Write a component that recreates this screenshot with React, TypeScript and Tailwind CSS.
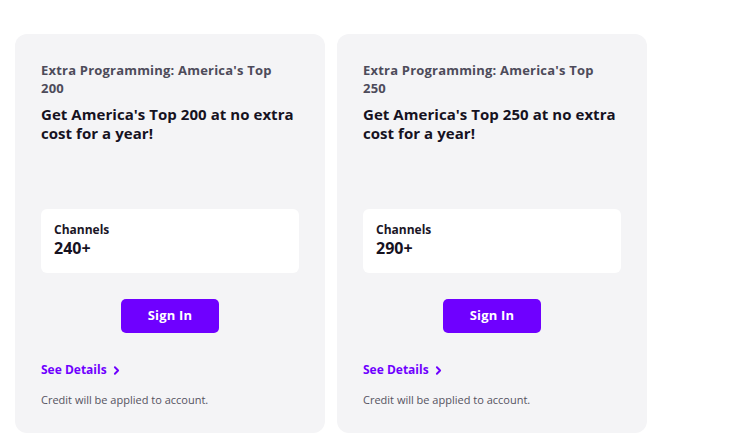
import { ChevronRight } from 'lucide-react'

const plans = [
  { title: "Extra Programming: America's Top 200", headline: "Get America's Top 200 at no extra cost for a year!", channels: '240+' },
  { title: "Extra Programming: America's Top 250", headline: "Get America's Top 250 at no extra cost for a year!", channels: '290+' },
]

function PlanCard({ title, headline, channels }: { title: string; headline: string; channels: string }) {
  return (
    <div className="w-[310px] h-[399px] rounded-xl bg-[#f4f4f6] px-[26px] pt-[27px] flex flex-col">
      <p className="pr-[8px] text-[13px] leading-[18px] font-bold tracking-[0.2px] text-[#4d4b5a]">{title}</p>
      <h2 className="mt-[8px] text-[15px] leading-[19px] font-bold tracking-[0.05px] text-[#16121f]">{headline}</h2>
      <div className="mt-[66px] h-[64px] rounded-md bg-white px-[13px] pt-[13px]">
        <p className="text-[12px] leading-[16px] font-bold text-[#1a1626]">Channels</p>
        <p className="text-[16px] leading-[21px] font-bold text-[#16121f]">{channels}</p>
      </div>
      <div className="mt-[26px] flex justify-center">
        <button className="w-[98px] h-[34px] rounded-[5px] bg-[#6f00ff] text-white text-[13px] font-bold tracking-[0.2px]">
          Sign In
        </button>
      </div>
      <a className="mt-[29px] flex items-center gap-[3px] text-[12px] leading-[16px] font-bold text-[#6f00ff]">
        See Details
        <ChevronRight size={13} strokeWidth={3.5} />
      </a>
      <p className="mt-[15px] text-[11px] leading-[14px] text-[#55535f]">Credit will be applied to account.</p>
    </div>
  )
}

export default function App() {
  return (
    <div className="w-[747px] h-[448px] bg-white pt-[34px] pl-[15px] flex gap-[12px] items-start" style={{ fontFamily: '"Open Sans", "Noto Sans", sans-serif' }}>
      {plans.map((p) => (
        <PlanCard key={p.channels} {...p} />
      ))}
    </div>
  )
}
